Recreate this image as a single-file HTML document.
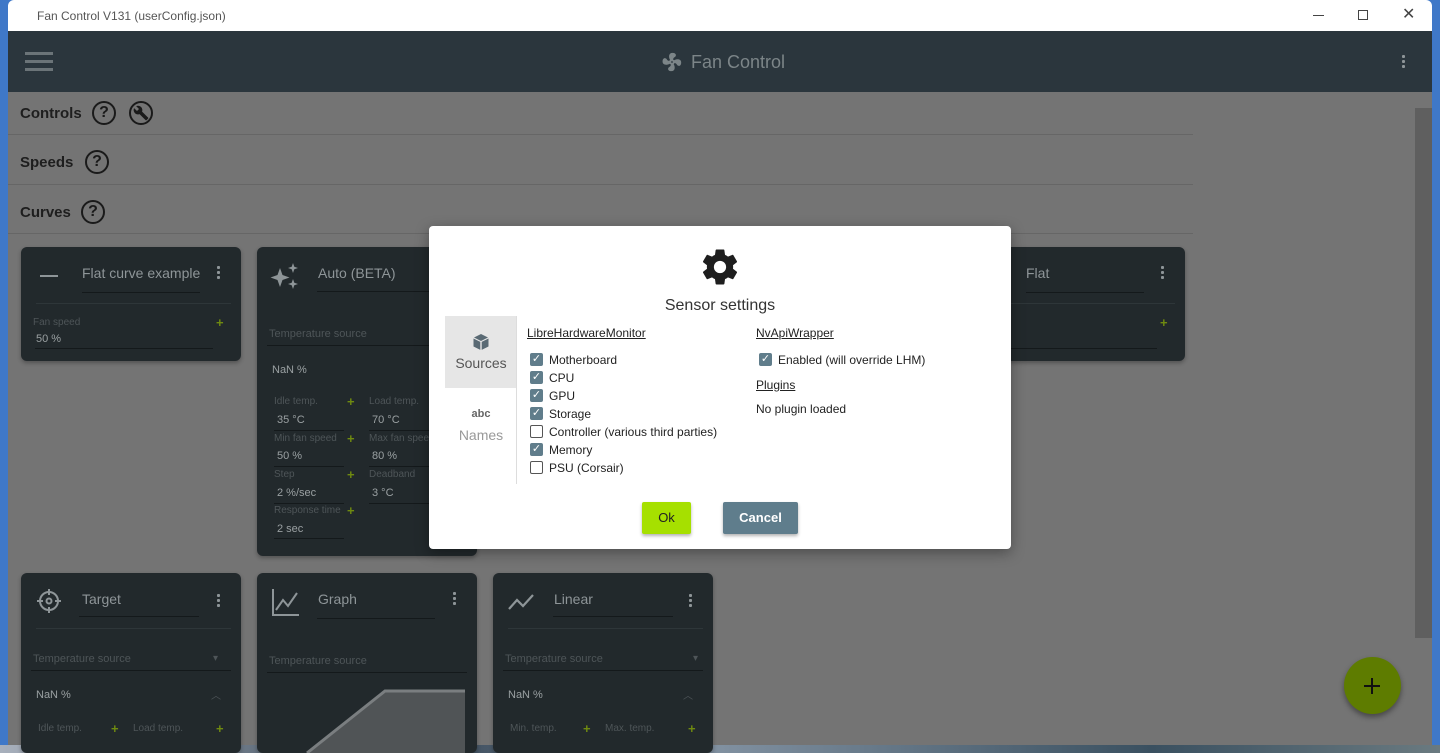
<!DOCTYPE html>
<html><head><meta charset="utf-8"><style>
*{margin:0;padding:0;box-sizing:border-box}
body{width:1440px;height:753px;overflow:hidden;position:relative;font-family:"Liberation Sans",sans-serif;background:#3f78c8}
.a{position:absolute}
.card{position:absolute;background:#22292c;border-radius:6px;box-shadow:0 2px 4px rgba(0,0,0,.3)}
.t{position:absolute;color:#8e9598;font-size:14px}
.s{position:absolute;color:#4e5558;font-size:10px}
.v{position:absolute;color:#9aa0a2;font-size:11px}
.ln{position:absolute;height:1px;background:#14191b}
.sep{position:absolute;height:1px;background:#2e3639}
.pl{position:absolute;color:#6f8a10;font-size:13px;font-weight:bold}
.keb{position:absolute;width:3px;height:15px;background:radial-gradient(circle,#8e9598 1.5px,transparent 1.6px) 0 0/3px 5px repeat-y}
.q{position:absolute;width:24px;height:24px;border:2px solid #1a1a1a;border-radius:50%;font-size:16px;font-weight:bold;text-align:center;line-height:20px;color:#1a1a1a}
.h{position:absolute;font-size:15px;font-weight:bold;color:#1e1e1e}
.hr{position:absolute;left:8px;width:1185px;height:1px;background:#666}
.cb{position:absolute;width:13px;height:13px;border-radius:2px;background:#607d8b;color:#fff;font-size:11px;line-height:13px;text-align:center}
.cb.u{background:#fff;border:1.5px solid #555}
.lb{position:absolute;font-size:12px;color:#222}
</style></head><body>
<div class="a" style="left:0;top:745px;width:1440px;height:8px;background:linear-gradient(90deg,#a8b0bc,#3a4a5a 30%,#8090a0 50%,#3a5060 80%,#6a7a80)"></div>
<div class="a" style="left:8px;top:0;width:1424px;height:31px;background:#fff;border-radius:6px 6px 0 0"></div>
<div class="a" style="left:37px;top:9px;font-size:12px;color:#555">Fan Control V131 (userConfig.json)</div>
<div class="a" style="left:1313px;top:15px;width:11px;height:1px;background:#444"></div>
<div class="a" style="left:1358px;top:10px;width:10px;height:10px;border:1px solid #444"></div>
<div class="a" style="left:1402px;top:4px;font-size:16px;color:#444">✕</div>
<div class="a" style="left:8px;top:31px;width:1424px;height:61px;background:#2b363d"></div>
<div class="a" style="left:25px;top:52px;width:28px;height:3px;background:#6b7478;box-shadow:0 8px 0 #6b7478,0 16px 0 #6b7478"></div>
<svg class="a" style="left:661px;top:51px" width="22" height="22" viewBox="0 0 24 24"><path fill="#7c8588" d="M12 11a1 1 0 1 0 0 2 1 1 0 0 0 0-2m.5-9c4.5 0 4.6 3.57 2.25 4.75-.99.49-1.430 1.54-1.62 2.47.48.2.9.51 1.22.91 3.7-2 7.67-1.21 7.670 2.37 0 4.5-3.57 4.6-4.75 2.25-.5-.99-1.56-1.43-2.49-1.62-.2.48-.51.89-.91 1.22 2.01 3.7 1.22 7.65-2.37 7.65-4.49 0-4.59-3.57-2.25-4.75.98-.49 1.42-1.53 1.62-2.45-.49-.2-.92-.52-1.24-.92C5.68 15.91 1.7 15.12 1.7 11.5 1.7 7 5.27 6.9 6.45 9.25c.5.99 1.56 1.42 2.49 1.62.2-.48.52-.89.9-1.22C7.850 5.95 8.64 2 12.5 2"/></svg>
<div class="a" style="left:691px;top:52px;font-size:18px;color:#7c8588">Fan Control</div>
<div class="keb" style="left:1402px;top:54px"></div>
<div class="a" style="left:8px;top:92px;width:1424px;height:653px;background:#747474"></div>
<div class="a" style="left:1415px;top:108px;width:17px;height:530px;background:#5f5f5f"></div>
<div class="h" style="left:20px;top:105px">Controls</div><div class="q" style="left:92px;top:101px">?</div>
<div class="q" style="left:129px;top:101px"></div>
<svg class="a" style="left:133px;top:105px" width="16" height="16" viewBox="0 0 24 24"><path fill="#1a1a1a" d="M22.7 19l-9.1-9.1c.9-2.300.4-5-1.500-6.900-2-2-5-2.400-7.400-1.300L9 6 6 9 1.600 4.700C.400 7.100.900 10.100 2.900 12.100c1.900 1.900 4.600 2.400 6.900 1.500l9.100 9.100c.4.400 1 .4 1.400 0l2.300-2.300c.5-.4.5-1.100.1-1.400z"/></svg>
<div class="hr" style="top:134px"></div>
<div class="h" style="left:20px;top:154px">Speeds</div><div class="q" style="left:85px;top:150px">?</div>
<div class="hr" style="top:184px"></div>
<div class="h" style="left:20px;top:204px">Curves</div><div class="q" style="left:81px;top:200px">?</div>
<div class="hr" style="top:233px"></div>

<div class="card" style="left:21px;top:247px;width:220px;height:114px">
<div class="a" style="left:19px;top:28px;width:18px;height:2px;background:#8e9598"></div>
<div class="t" style="left:61px;top:18px">Flat curve example</div>
<div class="ln" style="left:61px;top:45px;width:118px"></div>
<div class="keb" style="left:196px;top:18px"></div>
<div class="sep" style="left:15px;top:56px;width:195px"></div>
<div class="s" style="left:12px;top:70px">Fan speed</div><div class="pl" style="left:195px;top:68px">+</div>
<div class="v" style="left:15px;top:86px">50 %</div>
<div class="ln" style="left:14px;top:101px;width:178px"></div>
</div>
<div class="card" style="left:257px;top:247px;width:220px;height:309px">
<svg class="a" style="left:12px;top:14px" width="32" height="32" viewBox="0 0 32 32"><path fill="#8e9598" d="M11 7l2.5 7 7 2.5-7 2.5-2.5 7-2.5-7-7-2.5 7-2.5z M24 2l1.3 3.7L29 7l-3.7 1.3L24 12l-1.3-3.7L19 7l3.7-1.3z M24 18l1.3 3.7L29 23l-3.7 1.3L24 28l-1.3-3.7L19 23l3.7-1.3z"/></svg>
<div class="t" style="left:61px;top:18px">Auto (BETA)</div>
<div class="ln" style="left:60px;top:44px;width:160px"></div>
<div class="s" style="left:12px;top:81px;font-size:11px">Temperature source</div>
<div class="ln" style="left:10px;top:98px;width:210px"></div>
<div class="v" style="left:15px;top:117px">NaN %</div>
<div class="s" style="left:17px;top:149px">Idle temp.</div><div class="pl" style="left:90px;top:147px">+</div><div class="s" style="left:112px;top:149px">Load temp.</div>
<div class="v" style="left:20px;top:167px">35 °C</div><div class="v" style="left:115px;top:167px">70 °C</div>
<div class="ln" style="left:17px;top:183px;width:70px"></div><div class="ln" style="left:112px;top:183px;width:108px"></div>
<div class="s" style="left:17px;top:186px">Min fan speed</div><div class="pl" style="left:90px;top:184px">+</div><div class="s" style="left:112px;top:186px">Max fan speed</div>
<div class="v" style="left:20px;top:203px">50 %</div><div class="v" style="left:115px;top:203px">80 %</div>
<div class="ln" style="left:17px;top:219px;width:70px"></div><div class="ln" style="left:112px;top:219px;width:108px"></div>
<div class="s" style="left:17px;top:222px">Step</div><div class="pl" style="left:90px;top:220px">+</div><div class="s" style="left:112px;top:222px">Deadband</div>
<div class="v" style="left:20px;top:240px">2 %/sec</div><div class="v" style="left:115px;top:240px">3 °C</div>
<div class="ln" style="left:17px;top:256px;width:70px"></div><div class="ln" style="left:112px;top:256px;width:108px"></div>
<div class="s" style="left:17px;top:258px">Response time</div><div class="pl" style="left:90px;top:256px">+</div>
<div class="v" style="left:20px;top:276px">2 sec</div>
<div class="ln" style="left:17px;top:291px;width:70px"></div>
</div>
<div class="card" style="left:965px;top:247px;width:220px;height:114px">
<div class="t" style="left:61px;top:18px">Flat</div>
<div class="ln" style="left:61px;top:45px;width:118px"></div>
<div class="keb" style="left:196px;top:18px"></div>
<div class="sep" style="left:15px;top:56px;width:195px"></div>
<div class="pl" style="left:195px;top:68px">+</div>
<div class="ln" style="left:14px;top:101px;width:178px"></div>
</div>
<div class="card" style="left:21px;top:573px;width:220px;height:180px">
<svg class="a" style="left:14px;top:14px" width="28" height="28" viewBox="0 0 28 28" fill="none" stroke="#8e9598" stroke-width="2"><circle cx="14" cy="14" r="9"/><circle cx="14" cy="14" r="2.5"/><path d="M14 2v6M14 20v6M2 14h6M20 14h6"/></svg>
<div class="t" style="left:61px;top:18px">Target</div>
<div class="ln" style="left:58px;top:43px;width:120px"></div>
<div class="keb" style="left:196px;top:20px"></div>
<div class="sep" style="left:15px;top:55px;width:195px"></div>
<div class="s" style="left:12px;top:80px;font-size:11px">Temperature source</div><div class="s" style="left:192px;top:80px">▾</div>
<div class="ln" style="left:10px;top:97px;width:200px"></div>
<div class="v" style="left:15px;top:116px">NaN %</div><div class="s" style="left:190px;top:114px">︿</div>
<div class="s" style="left:17px;top:150px">Idle temp.</div><div class="pl" style="left:90px;top:148px">+</div><div class="s" style="left:112px;top:150px">Load temp.</div><div class="pl" style="left:195px;top:148px">+</div>
</div>
<div class="card" style="left:257px;top:573px;width:220px;height:180px">
<svg class="a" style="left:14px;top:14px" width="30" height="30" viewBox="0 0 30 30" fill="none" stroke="#8e9598" stroke-width="2"><path d="M2 2v26h26M5 23l7-10 5 6 9-13"/></svg>
<div class="t" style="left:61px;top:18px">Graph</div>
<div class="ln" style="left:60px;top:45px;width:118px"></div>
<div class="keb" style="left:196px;top:18px"></div>
<div class="s" style="left:12px;top:82px;font-size:11px">Temperature source</div>
<div class="ln" style="left:10px;top:99px;width:200px"></div>
<svg class="a" style="left:10px;top:115px" width="200" height="65"><path d="M40 65 L118 3 H198 V65Z" fill="#505456"/><path d="M40 65 L118 3 H198" stroke="#7a7e80" stroke-width="3" fill="none"/></svg>
</div>
<div class="card" style="left:493px;top:573px;width:220px;height:180px">
<svg class="a" style="left:14px;top:20px" width="28" height="20" viewBox="0 0 28 20" fill="none" stroke="#8e9598" stroke-width="2.2"><path d="M2 16l8-9 6 6 10-11"/></svg>
<div class="t" style="left:61px;top:18px">Linear</div>
<div class="ln" style="left:60px;top:43px;width:120px"></div>
<div class="keb" style="left:196px;top:20px"></div>
<div class="sep" style="left:15px;top:55px;width:195px"></div>
<div class="s" style="left:12px;top:80px;font-size:11px">Temperature source</div><div class="s" style="left:200px;top:80px">▾</div>
<div class="ln" style="left:10px;top:97px;width:200px"></div>
<div class="v" style="left:15px;top:116px">NaN %</div><div class="s" style="left:190px;top:114px">︿</div>
<div class="s" style="left:17px;top:150px">Min. temp.</div><div class="pl" style="left:90px;top:148px">+</div><div class="s" style="left:112px;top:150px">Max. temp.</div><div class="pl" style="left:195px;top:148px">+</div>
</div>
<div class="a" style="left:1344px;top:657px;width:57px;height:57px;border-radius:50%;background:#5e7c00;box-shadow:0 3px 6px rgba(0,0,0,.4)"></div>
<div class="a" style="left:1364px;top:685px;width:16px;height:2px;background:#111"></div>
<div class="a" style="left:1371px;top:678px;width:2px;height:16px;background:#111"></div>

<div class="a" style="left:429px;top:226px;width:582px;height:323px;background:#fff;border-radius:4px;box-shadow:0 4px 14px rgba(0,0,0,.35)">
<svg class="a" style="left:270px;top:20px" width="42" height="42" viewBox="0 0 24 24"><path fill="#1e1e1e" d="M12 15.5A3.5 3.5 0 0 1 8.5 12 3.5 3.5 0 0 1 12 8.5a3.5 3.5 0 0 1 3.5 3.5 3.5 3.5 0 0 1-3.5 3.5m7.43-2.53c.04-.32.07-.64.07-.97s-.03-.66-.07-1l2.11-1.63c.19-.15.24-.42.12-.64l-2-3.46c-.12-.22-.39-.31-.61-.22l-2.49 1c-.52-.39-1.06-.73-1.69-.98l-.37-2.65A.506.506 0 0 0 14 2h-4c-.25 0-.46.18-.5.42l-.37 2.65c-.63.25-1.17.59-1.69.98l-2.49-1c-.22-.09-.49 0-.61.22l-2 3.46c-.13.22-.07.49.12.64L4.57 11c-.04.34-.07.67-.07 1s.03.65.07.97l-2.11 1.66c-.19.15-.25.42-.12.64l2 3.460c.12.22.39.3.61.22l2.49-1.010c.52.4 1.06.74 1.69.99l.37 2.650c.04.24.25.42.5.42h4c.25 0 .46-.18.5-.42l.37-2.65c.63-.26 1.170-.59 1.690-.99l2.490 1.010c.22.08.49 0 .61-.22l2-3.46c.12-.22.07-.49-.12-.64z"/></svg>
<div class="a" style="left:0;width:582px;top:71px;text-align:center;font-size:16px;color:#333">Sensor settings</div>
<div class="a" style="left:16px;top:90px;width:72px;height:72px;background:#e6e6e6"></div>
<svg class="a" style="left:43px;top:107px" width="18" height="18" viewBox="0 0 18 18"><path fill="#5a6a74" d="M9 1l7 3.5-7 3.5-7-3.5z M1.5 5.5l6.8 3.4v8L1.5 13.5z M16.5 5.5v8l-6.8 3.4v-8z"/></svg>
<div class="a" style="left:16px;top:129px;width:72px;text-align:center;font-size:14px;color:#555">Sources</div>
<div class="a" style="left:16px;top:182px;width:72px;text-align:center;font-size:11px;font-weight:bold;color:#666">abc</div>
<div class="a" style="left:16px;top:201px;width:72px;text-align:center;font-size:14px;color:#999">Names</div>
<div class="a" style="left:87px;top:90px;width:1px;height:168px;background:#ddd"></div>
<div class="lb" style="left:98px;top:100px;text-decoration:underline">LibreHardwareMonitor</div>
<div class="cb" style="left:101px;top:127px">✓</div><div class="lb" style="left:120px;top:127px">Motherboard</div>
<div class="cb" style="left:101px;top:145px">✓</div><div class="lb" style="left:120px;top:145px">CPU</div>
<div class="cb" style="left:101px;top:163px">✓</div><div class="lb" style="left:120px;top:163px">GPU</div>
<div class="cb" style="left:101px;top:181px">✓</div><div class="lb" style="left:120px;top:181px">Storage</div>
<div class="cb u" style="left:101px;top:199px"></div><div class="lb" style="left:120px;top:199px">Controller (various third parties)</div>
<div class="cb" style="left:101px;top:217px">✓</div><div class="lb" style="left:120px;top:217px">Memory</div>
<div class="cb u" style="left:101px;top:235px"></div><div class="lb" style="left:120px;top:235px">PSU (Corsair)</div>
<div class="lb" style="left:327px;top:100px;text-decoration:underline">NvApiWrapper</div>
<div class="cb" style="left:330px;top:127px">✓</div><div class="lb" style="left:349px;top:127px">Enabled (will override LHM)</div>
<div class="lb" style="left:327px;top:152px;text-decoration:underline">Plugins</div>
<div class="lb" style="left:327px;top:176px">No plugin loaded</div>
<div class="a" style="left:213px;top:276px;width:49px;height:32px;background:#a6e000;border-radius:2px;box-shadow:0 2px 3px rgba(0,0,0,.3);text-align:center;line-height:32px;font-size:13px;color:#222">Ok</div>
<div class="a" style="left:294px;top:276px;width:75px;height:32px;background:#5f7d8c;border-radius:2px;box-shadow:0 2px 3px rgba(0,0,0,.3);text-align:center;line-height:32px;font-size:13px;font-weight:bold;color:#fff">Cancel</div>
</div>
</body></html>
